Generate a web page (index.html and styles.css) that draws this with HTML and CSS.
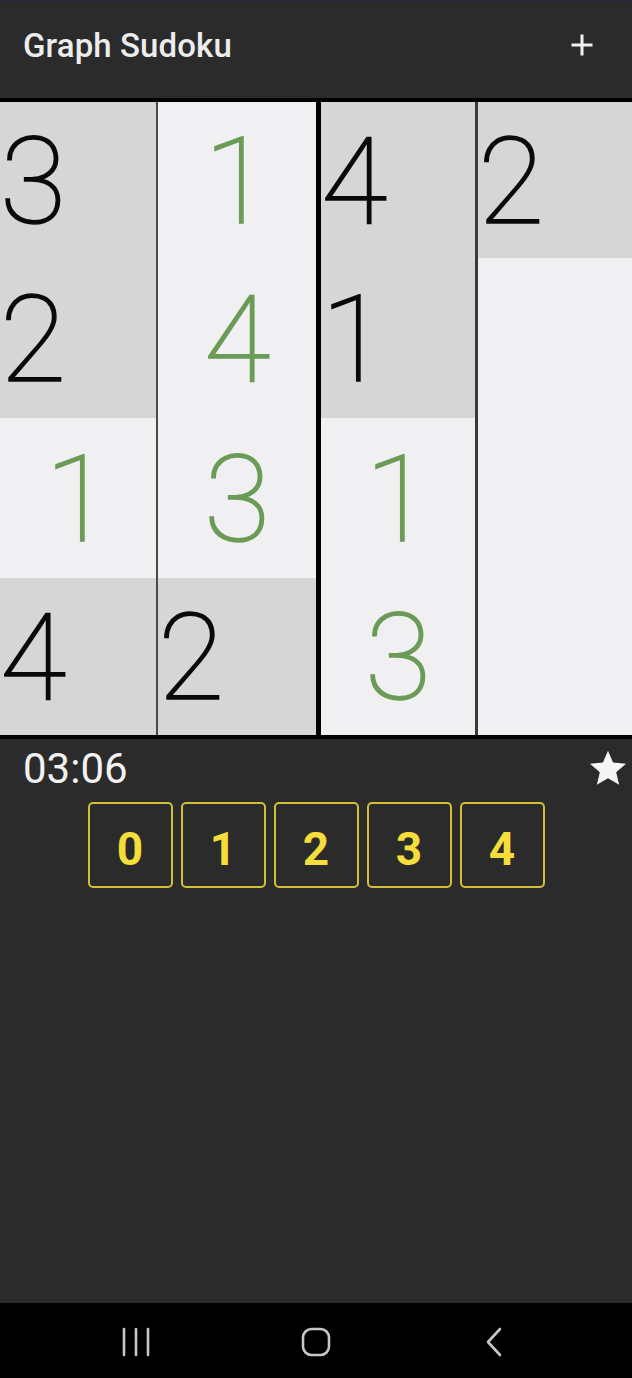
FILE: index.html
```html
<!DOCTYPE html>
<html lang="en">
<head>
<meta charset="utf-8">
<title>Graph Sudoku</title>
<link rel="stylesheet" href="styles.css">
</head>
<body>
<div class="app">
  <header class="topbar">
    <h1 class="title">Graph Sudoku</h1>
    <svg class="plus" viewBox="0 0 24 24" width="24" height="24" aria-label="New game">
      <path d="M12 1.5v21M1.5 12h21" stroke="#f2f2f2" stroke-width="3" fill="none"/>
    </svg>
  </header>

  <main class="board">
    <div class="col c1">
      <div class="cell gray r1"><span class="num given">3</span></div>
      <div class="cell gray r2"><span class="num given">2</span></div>
      <div class="cell light r3"><span class="num entered">1</span></div>
      <div class="cell gray r4"><span class="num given">4</span></div>
    </div>
    <div class="col c2">
      <div class="cell light r1"><span class="num entered">1</span></div>
      <div class="cell light r2"><span class="num entered">4</span></div>
      <div class="cell light r3"><span class="num entered">3</span></div>
      <div class="cell gray r4"><span class="num given">2</span></div>
    </div>
    <div class="col c3">
      <div class="cell gray r1"><span class="num given">4</span></div>
      <div class="cell gray r2"><span class="num given">1</span></div>
      <div class="cell light r3"><span class="num entered">1</span></div>
      <div class="cell light r4"><span class="num entered">3</span></div>
    </div>
    <div class="col c4">
      <div class="cell gray r1"><span class="num given">2</span></div>
      <div class="cell light r2"></div>
      <div class="cell light r3"></div>
      <div class="cell light r4"></div>
    </div>
  </main>

  <section class="controls">
    <div class="status">
      <span class="timer">03:06</span>
      <svg class="star" viewBox="2 2 20 19.27" width="36" height="36" aria-label="Favourite">
        <path d="M12 17.27L18.18 21l-1.64-7.03L22 9.24l-7.19-.61L12 2 9.19 8.63 2 9.24l5.46 4.73L5.82 21z" fill="#f5f5f5"/>
      </svg>
    </div>
    <div class="keys">
      <button class="key">0</button>
      <button class="key">1</button>
      <button class="key">2</button>
      <button class="key">3</button>
      <button class="key">4</button>
    </div>
  </section>

  <nav class="navbar">
    <span class="nav-item">
      <svg viewBox="0 0 32 32" width="32" height="32">
        <path d="M4 3v26M16 3v26M28 3v26" stroke="#c6c6c6" stroke-width="2.6" stroke-linecap="round" fill="none"/>
      </svg>
    </span>
    <span class="nav-item">
      <svg viewBox="0 0 32 32" width="32" height="32">
        <rect x="3" y="3" width="26" height="26" rx="8.5" stroke="#c6c6c6" stroke-width="2.6" fill="none"/>
      </svg>
    </span>
    <span class="nav-item">
      <svg viewBox="0 0 32 32" width="32" height="32">
        <path d="M20 3L8 16l12 13" stroke="#c6c6c6" stroke-width="2.6" stroke-linecap="round" stroke-linejoin="round" fill="none"/>
      </svg>
    </span>
  </nav>
</div>
</body>
</html>
```

FILE: styles.css
```css
* {
  box-sizing: border-box;
}

html, body {
  margin: 0;
  padding: 0;
  background: #2b2b2b;
}

body {
  font-family: Roboto, "Noto Sans", "Liberation Sans", sans-serif;
}

.app {
  width: 632px;
  height: 1378px;
  display: flex;
  flex-direction: column;
  overflow: hidden;
}

/* top app bar */
.topbar {
  height: 98px;
  flex: none;
  border-top: 2px solid #2a2638;
  background: #2b2b2b;
  display: flex;
  justify-content: space-between;
  align-items: flex-start;
  padding: 25px 38px 0 23px;
}

.title {
  margin: 0;
  font-size: 33px;
  font-weight: 500;
  line-height: 38px;
  color: #ededed;
  letter-spacing: 0.1px;
}

.plus {
  margin-top: 6px;
  display: block;
}

/* board */
.board {
  flex: none;
  display: flex;
  border-top: 4px solid #000;
  border-bottom: 4px solid #000;
  background: #000;
}

.col {
  display: flex;
  flex-direction: column;
  flex: none;
}

.c1 { width: 156px; }
.c2 { width: 160px; border-left: 2px solid #4a4a4a; }
.c3 { width: 159px; border-left: 5px solid #000; }
.c4 { width: 157px; border-left: 3px solid #3a3a3a; }

.cell {
  display: flex;
  align-items: center;
  padding-top: 4px;
}

.r1 { height: 156px; }
.r2 { height: 160px; }
.r3 { height: 160px; }
.r4 { height: 157px; }

.gray { background: #d6d6d6; }
.light { background: #f0eff1; }

.num {
  font-size: 121px;
  font-weight: 100;
  line-height: 1;
  -webkit-text-stroke: 1.6px currentColor;
}

.given {
  color: #0a0a0a;
  margin-left: 0;
}

.entered {
  color: #6b9b57;
  margin: 0 auto;
}

/* controls */
.controls {
  flex: 1;
  background: #2b2b2b;
}

.status {
  height: 58px;
  display: flex;
  align-items: center;
  justify-content: space-between;
  padding: 0 6px 0 23px;
}

.timer {
  font-size: 42px;
  font-weight: 400;
  color: #f2f2f2;
  line-height: 49px;
}

.star {
  display: block;
}

.keys {
  margin-top: 5px;
  display: flex;
  justify-content: center;
  gap: 8px;
}

.key {
  width: 85px;
  height: 86px;
  background: #2b2b2b;
  border: 2px solid #d3bf36;
  border-radius: 5px;
  color: #f5dd3c;
  font-family: Roboto, "Noto Sans", "Liberation Sans", sans-serif;
  font-size: 46px;
  font-weight: 700;
  padding: 8px 0 0 0;
  display: flex;
  align-items: center;
  justify-content: center;
  line-height: 1;
}

/* system nav bar */
.navbar {
  height: 75px;
  flex: none;
  background: #000;
  display: grid;
  grid-template-columns: repeat(3, 180px);
  justify-content: center;
  align-items: center;
  padding-top: 2px;
}

.nav-item {
  display: flex;
  justify-content: center;
}

.nav-item svg {
  display: block;
}
```
